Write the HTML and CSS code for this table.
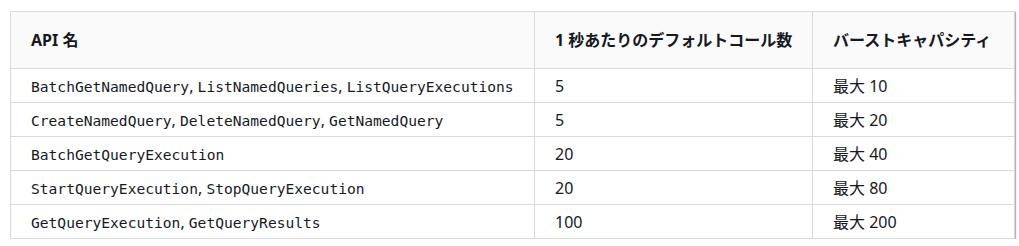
FILE: index.html
```html
<!DOCTYPE html>
<html lang="ja">
<head>
<meta charset="utf-8">
<link rel="stylesheet" href="styles.css">
</head>
<body>
<div class="wrap">
<table class="quota">
  <colgroup>
    <col class="c1"><col class="c2"><col class="c3">
  </colgroup>
  <thead>
    <tr><th>API 名</th><th>1 秒あたりのデフォルトコール数</th><th>バーストキャパシティ</th></tr>
  </thead>
  <tbody>
    <tr><td><code>BatchGetNamedQuery</code>, <code>ListNamedQueries</code>, <code>ListQueryExecutions</code></td><td>5</td><td>最大 10</td></tr>
    <tr><td><code>CreateNamedQuery</code>, <code>DeleteNamedQuery</code>, <code>GetNamedQuery</code></td><td>5</td><td>最大 20</td></tr>
    <tr><td><code>BatchGetQueryExecution</code></td><td>20</td><td>最大 40</td></tr>
    <tr><td><code>StartQueryExecution</code>, <code>StopQueryExecution</code></td><td>20</td><td>最大 80</td></tr>
    <tr><td><code>GetQueryExecution</code>, <code>GetQueryResults</code></td><td>100</td><td>最大 200</td></tr>
  </tbody>
</table>
</div>
</body>
</html>
```
FILE: styles.css
```css
html, body {
  margin: 0;
  padding: 0;
  background: #ffffff;
}
.wrap {
  padding: 11px 0 0 10px;
}
.quota {
  border-collapse: collapse;
  width: 1004px;
  table-layout: fixed;
  font-family: "Noto Sans", "Noto Sans CJK JP", sans-serif;
  font-size: 16px;
  color: #16191f;
  box-shadow: 1px 1px 1px rgba(0, 0, 0, 0.3);
}
.c1 { width: 524px; }
.c2 { width: 278px; }
.c3 { width: 202px; }
.quota th, .quota td {
  border: 1px solid #d5dbdb;
  text-align: left;
  vertical-align: middle;
  line-height: 24px;
  white-space: nowrap;
}
.quota th {
  background: #fafafa;
  font-weight: 700;
  padding: 16px 20px;
}
.quota td {
  padding: 5px 20px 4px;
  height: 24px;
}
.quota code {
  font-family: "DejaVu Sans Mono", monospace;
  font-size: 14.6px;
  line-height: 16px;
}
```
